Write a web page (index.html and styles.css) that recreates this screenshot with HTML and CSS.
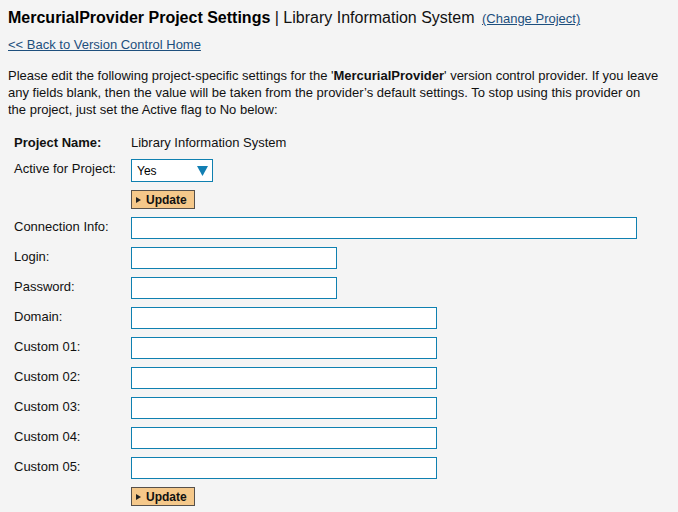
FILE: index.html
```html
<!DOCTYPE html>
<html>
<head>
<meta charset="utf-8">
<link rel="stylesheet" href="styles.css">
</head>
<body>
<h1 class="title"><strong>MercurialProvider Project Settings</strong> | Library Information System <a class="change" href="#">(Change Project)</a></h1>
<div class="back"><a href="#">&lt;&lt; Back to Version Control Home</a></div>
<p class="intro">Please edit the following project-specific settings for the '<strong>MercurialProvider</strong>' version control provider. If you leave any fields blank, then the value will be taken from the provider’s default settings. To stop using this provider on the project, just set the Active flag to No below:</p>
<div class="form">
  <div class="label bold r1">Project Name:</div>
  <div class="value r1">Library Information System</div>

  <div class="label">Active for Project:</div>
  <div class="value">
    <div class="select"><span>Yes</span><svg class="arrow" width="11" height="10" viewBox="0 0 11 10"><polygon points="0,0 11,0 5.5,10" fill="#127fb3"/></svg></div>
  </div>

  <div class="label"></div>
  <div class="value"><button class="btn"><span class="tri"></span>Update</button></div>

  <div class="label">Connection Info:</div>
  <div class="value"><input class="in wide"></div>

  <div class="label">Login:</div>
  <div class="value"><input class="in short"></div>

  <div class="label">Password:</div>
  <div class="value"><input class="in short"></div>

  <div class="label">Domain:</div>
  <div class="value"><input class="in mid"></div>

  <div class="label">Custom 01:</div>
  <div class="value"><input class="in mid"></div>

  <div class="label">Custom 02:</div>
  <div class="value"><input class="in mid"></div>

  <div class="label">Custom 03:</div>
  <div class="value"><input class="in mid"></div>

  <div class="label">Custom 04:</div>
  <div class="value"><input class="in mid"></div>

  <div class="label">Custom 05:</div>
  <div class="value"><input class="in mid"></div>

  <div class="label"></div>
  <div class="value"><button class="btn"><span class="tri"></span>Update</button></div>
</div>
</body>
</html>
```
FILE: styles.css
```css
html, body {
  background: #f4f4f4;
}
body {
  margin: 8px;
  font-family: "Liberation Sans", Arial, sans-serif;
  font-size: 13px;
  color: #111;
}
a {
  color: #1d4f7d;
}
.title {
  margin: 0;
  font-size: 16px;
  font-weight: normal;
  line-height: 20px;
  color: #111;
}
.title strong {
  color: #000;
}
.change {
  font-size: 13px;
  margin-left: 3px;
}
.back {
  margin-top: 8px;
  line-height: 16px;
}
.intro {
  margin: 14px 0 0 0;
  line-height: 17px;
  padding-right: 10px;
}
.form {
  display: grid;
  grid-template-columns: 117px 1fr;
  row-gap: 8px;
  align-items: center;
  margin: 17px 0 0 6px;
}
.label {
  line-height: 16px;
  padding-bottom: 3px;
}
.bold {
  font-weight: bold;
}
.r1 {
  line-height: 16px;
  padding-bottom: 0;
}
.select {
  box-sizing: border-box;
  width: 82px;
  height: 23px;
  background: #fff;
  border: 1px solid #0f80b0;
  display: flex;
  align-items: center;
  justify-content: space-between;
  padding: 0 4px 0 5px;
  font-size: 12px;
  color: #000;
}
.arrow {
  display: block;
}
.btn {
  box-sizing: border-box;
  height: 19px;
  width: 64px;
  background: #f5c88a;
  border: 1px solid #56504a;
  border-radius: 0;
  padding: 0 0 0 4px;
  font-family: "Liberation Sans", Arial, sans-serif;
  font-size: 12px;
  font-weight: bold;
  color: #111;
  display: flex;
  align-items: center;
  text-align: left;
}
.tri {
  width: 0;
  height: 0;
  border-top: 3px solid transparent;
  border-bottom: 3px solid transparent;
  border-left: 5px solid #222;
  margin-right: 5px;
}
.in {
  box-sizing: border-box;
  display: block;
  height: 22px;
  border: 1px solid #0f80b0;
  background: #fff;
  margin: 0;
  padding: 0 3px;
  outline: none;
}
.wide { width: 506px; }
.short { width: 206px; }
.mid { width: 306px; }
```
